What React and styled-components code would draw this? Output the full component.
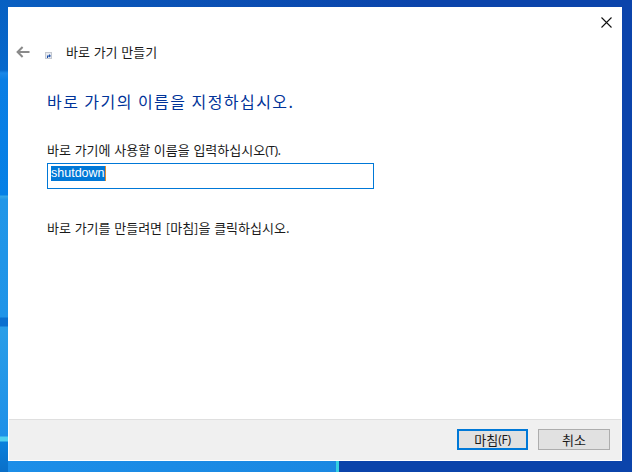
import React from "react";
import styled, { createGlobalStyle } from "styled-components";

const Global = createGlobalStyle`
  html, body { margin: 0; padding: 0; height: 100%; overflow: hidden; }
  #root { height: 100%; }
`;

const Desktop = styled.div`
  box-sizing: border-box;
  width: 632px;
  height: 472px;
  padding: 7px 10px 11px 8px;
  display: flex;
  background-color: #0b44ab;
  background-repeat: no-repeat;
  background-image:
    linear-gradient(180deg,
      #0760c2 0, #0668cc 70px, #1a88e8 73px, #0a7ee4 80px, #0580e6 195px,
      #35a8e8 196px, #2196e8 200px, #1f94e8 317px,
      #0a6fcf 318px, #0a6fcf 326px, #2a9ee8 327px, #1e90e8 436px,
      #4fd0f0 437px, #4fd0f0 441px, #0a80dc 442px, #0a6fc8 472px),
    linear-gradient(90deg, #1c8ee8 0, #1a88e2 336px, #35d0e0 336px, #35d0e0 339px, #0b44ab 339px),
    linear-gradient(90deg, #0a60c2 0, #0a55b8 120px, #0b44ab 420px);
  background-size: 8px 100%, 100% 11px, 100% 7px;
  background-position: left top, left bottom, left top;
  font-family: "Noto Sans CJK KR", "Noto Sans", sans-serif;
`;

const Window = styled.div`
  flex: 1;
  display: flex;
  flex-direction: column;
  background: #fff;
  min-width: 0;
`;

const TopBar = styled.div`
  height: 20px;
  padding: 10px 10px 0 0;
  display: flex;
  justify-content: flex-end;
  align-items: flex-start;
`;

const Header = styled.div`
  display: flex;
  align-items: center;
  height: 20px;
  margin-top: 5px;
  padding-left: 8px;
`;

const BackIcon = styled.svg`
  width: 14px;
  height: 12px;
  display: block;
`;

const ShortcutIcon = styled.svg`
  width: 7px;
  height: 7px;
  margin: 7px 14px 0 15px;
  display: block;
`;

const HeaderTitle = styled.span`
  font-size: 13px;
  line-height: 20px;
  word-spacing: 0.8px;
  color: #1a1a1a;
`;

const Content = styled.div`
  flex: 1;
  padding: 28px 0 0 39px;
  display: flex;
  flex-direction: column;
  align-items: flex-start;
`;

const Heading = styled.div`
  font-size: 16px;
  line-height: 22px;
  letter-spacing: 1.45px;
  color: #003399;
`;

const FieldLabel = styled.label`
  margin-top: 29px;
  font-size: 13px;
  line-height: 18px;
  word-spacing: 0.8px;
  color: #1a1a1a;
`;

const Latin = styled.span`
  font-family: "Noto Sans", sans-serif;
  font-size: 12px;
  letter-spacing: ${p => p.$ls || 0}px;
`;

const NameBox = styled.div`
  box-sizing: border-box;
  margin-top: 3px;
  width: 327px;
  height: 26px;
  border: 1px solid #0078d7;
  padding: 2px 0 0 3px;
  display: flex;
  align-items: flex-start;
`;

const Selected = styled.span`
  font-family: "Liberation Sans", sans-serif;
  font-size: 12.5px;
  line-height: 15px;
  background: #0078d7;
  color: #fff;
  border-right: 1px solid #e08a2c;
`;

const Hint = styled.div`
  margin-top: 30px;
  font-size: 13px;
  line-height: 18px;
  word-spacing: 0.8px;
  color: #1a1a1a;
`;

const Footer = styled.div`
  height: 41px;
  box-sizing: border-box;
  margin: 0 1px 1px;
  border-top: 1px solid #dfdfdf;
  background: #f0f0f0;
  padding: 9px 11px 0 0;
  display: flex;
  justify-content: flex-end;
  gap: 10px;
`;

const Button = styled.div`
  box-sizing: border-box;
  width: ${p => p.$w}px;
  height: 21px;
  background: #e1e1e1;
  border: ${p => (p.$primary ? "2px solid #0078d7" : "1px solid #adadad")};
  display: flex;
  align-items: center;
  justify-content: center;
  font-size: 13px;
  color: #1a1a1a;
`;

export default function App() {
  return (
    <>
      <Global />
      <Desktop>
        <Window>
          <TopBar>
            <svg width="11" height="11" viewBox="0 0 11 11">
              <path d="M0.5 0.5L10.5 10.5M10.5 0.5L0.5 10.5" stroke="#111" strokeWidth="1.1" fill="none" />
            </svg>
          </TopBar>
          <Header>
            <BackIcon viewBox="0 0 14 12">
              <path d="M13.5 6H1.8M6.6 1L1.6 6L6.6 11" stroke="#8a8a8a" strokeWidth="2" fill="none" />
            </BackIcon>
            <ShortcutIcon viewBox="0 0 7 7">
              <rect width="7" height="7" fill="#c4c8d0" />
              <rect x="1" y="1" width="5" height="5" fill="#e8ebf0" />
              <path d="M2 6V3.5L4 3.5V2L6 4L4 5.5V4.6L3 4.8V6Z" fill="#1c4fa8" />
            </ShortcutIcon>
            <HeaderTitle>바로 가기 만들기</HeaderTitle>
          </Header>
          <Content>
            <Heading>바로 가기의 이름을 지정하십시오.</Heading>
            <FieldLabel>바로 가기에 사용할 이름을 입력하십시오<Latin $ls={-0.5}>(T)</Latin>.</FieldLabel>
            <NameBox>
              <Selected>shutdown</Selected>
            </NameBox>
            <Hint>바로 가기를 만들려면 [마침]을 클릭하십시오.</Hint>
          </Content>
          <Footer>
            <Button $primary $w={71}>마침<Latin $ls={-0.4}>(F)</Latin></Button>
            <Button $w={72}>취소</Button>
          </Footer>
        </Window>
      </Desktop>
    </>
  );
}
